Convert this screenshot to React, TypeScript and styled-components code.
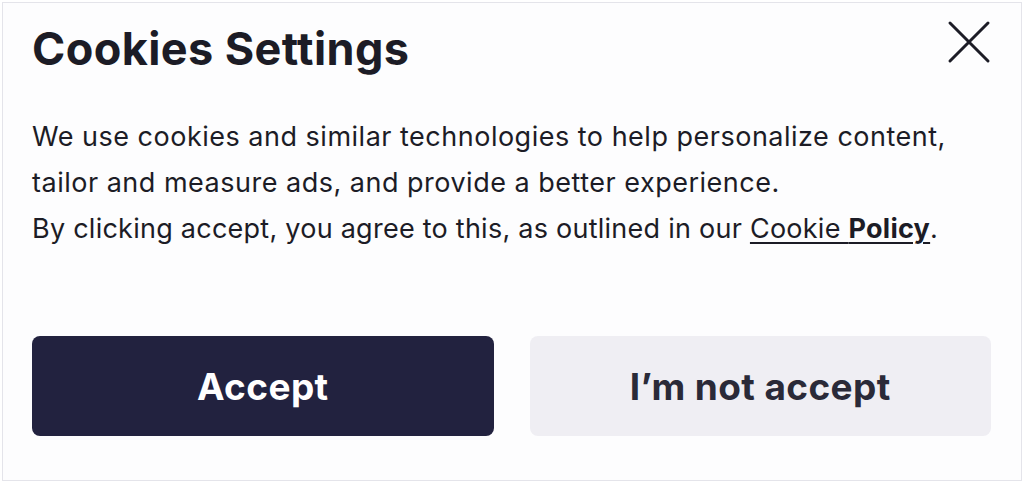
import React from "react";
import styled, { createGlobalStyle } from "styled-components";

const Global = createGlobalStyle`
  html, body {
    margin: 0;
    padding: 0;
    background: #ffffff;
  }
  body {
    font-family: Inter, "Liberation Sans", sans-serif;
  }
`;

const TEXT_COLOR = "#1c1c26";

const Page = styled.div`
  width: 1024px;
  height: 483px;
  padding: 2px;
  box-sizing: border-box;
`;

const Card = styled.div`
  display: flex;
  flex-direction: column;
  height: 100%;
  box-sizing: border-box;
  border: 1px solid #e4e4ea;
  background: #fdfdfe;
  padding: 22px 30px 0 29px;
`;

const Header = styled.div`
  display: flex;
  justify-content: space-between;
  align-items: flex-start;
`;

const Title = styled.h1`
  margin: 0;
  font-size: 45px;
  font-weight: 700;
  line-height: 48px;
  color: ${TEXT_COLOR};
  letter-spacing: 0.4px;
`;

const Close = styled.button`
  border: none;
  background: none;
  padding: 0;
  margin-top: -5px;
  width: 44px;
  height: 44px;
  display: flex;
  align-items: center;
  justify-content: center;
  cursor: pointer;
`;

const Body = styled.div`
  margin-top: 41px;
  font-size: 27px;
  line-height: 46px;
  letter-spacing: 0.5px;
  color: ${TEXT_COLOR};
`;

const Line = styled.p<{ $tight?: boolean }>`
  margin: 0;
  white-space: nowrap;
  letter-spacing: ${(p) => (p.$tight ? "0.25px" : "inherit")};
`;

const PolicyLink = styled.a`
  color: inherit;
  text-decoration: underline;
  text-underline-offset: 4px;
  text-decoration-thickness: 2px;
`;

const Strong = styled.strong`
  font-weight: 700;
`;

const Actions = styled.div`
  display: grid;
  grid-template-columns: 1fr 1fr;
  gap: 36px;
  margin-top: 84px;
`;

const Button = styled.button<{ $primary?: boolean }>`
  height: 100px;
  border: none;
  border-radius: 8px;
  font-family: Inter, "Liberation Sans", sans-serif;
  font-size: 37px;
  font-weight: 700;
  letter-spacing: 0.4px;
  cursor: pointer;
  background: ${(p) => (p.$primary ? "#22223f" : "#efeef3")};
  color: ${(p) => (p.$primary ? "#ffffff" : "#2a2a38")};
`;

export default function App() {
  return (
    <Page>
      <Global />
      <Card>
        <Header>
          <Title>Cookies Settings</Title>
          <Close aria-label="Close">
            <svg width="44" height="44" viewBox="0 0 44 44">
              <path
                d="M3 3 L41 41 M41 3 L3 41"
                stroke="#1c1c26"
                strokeWidth="3"
                strokeLinecap="round"
              />
            </svg>
          </Close>
        </Header>
        <Body>
          <Line>
            We use cookies and similar technologies to help personalize content,
          </Line>
          <Line>tailor and measure ads, and provide a better experience.</Line>
          <Line $tight>
            By clicking accept, you agree to this, as outlined in our{" "}
            <PolicyLink href="#">
              Cookie <Strong>Policy</Strong>
            </PolicyLink>
            .
          </Line>
        </Body>
        <Actions>
          <Button $primary>Accept</Button>
          <Button>I’m not accept</Button>
        </Actions>
      </Card>
    </Page>
  );
}
